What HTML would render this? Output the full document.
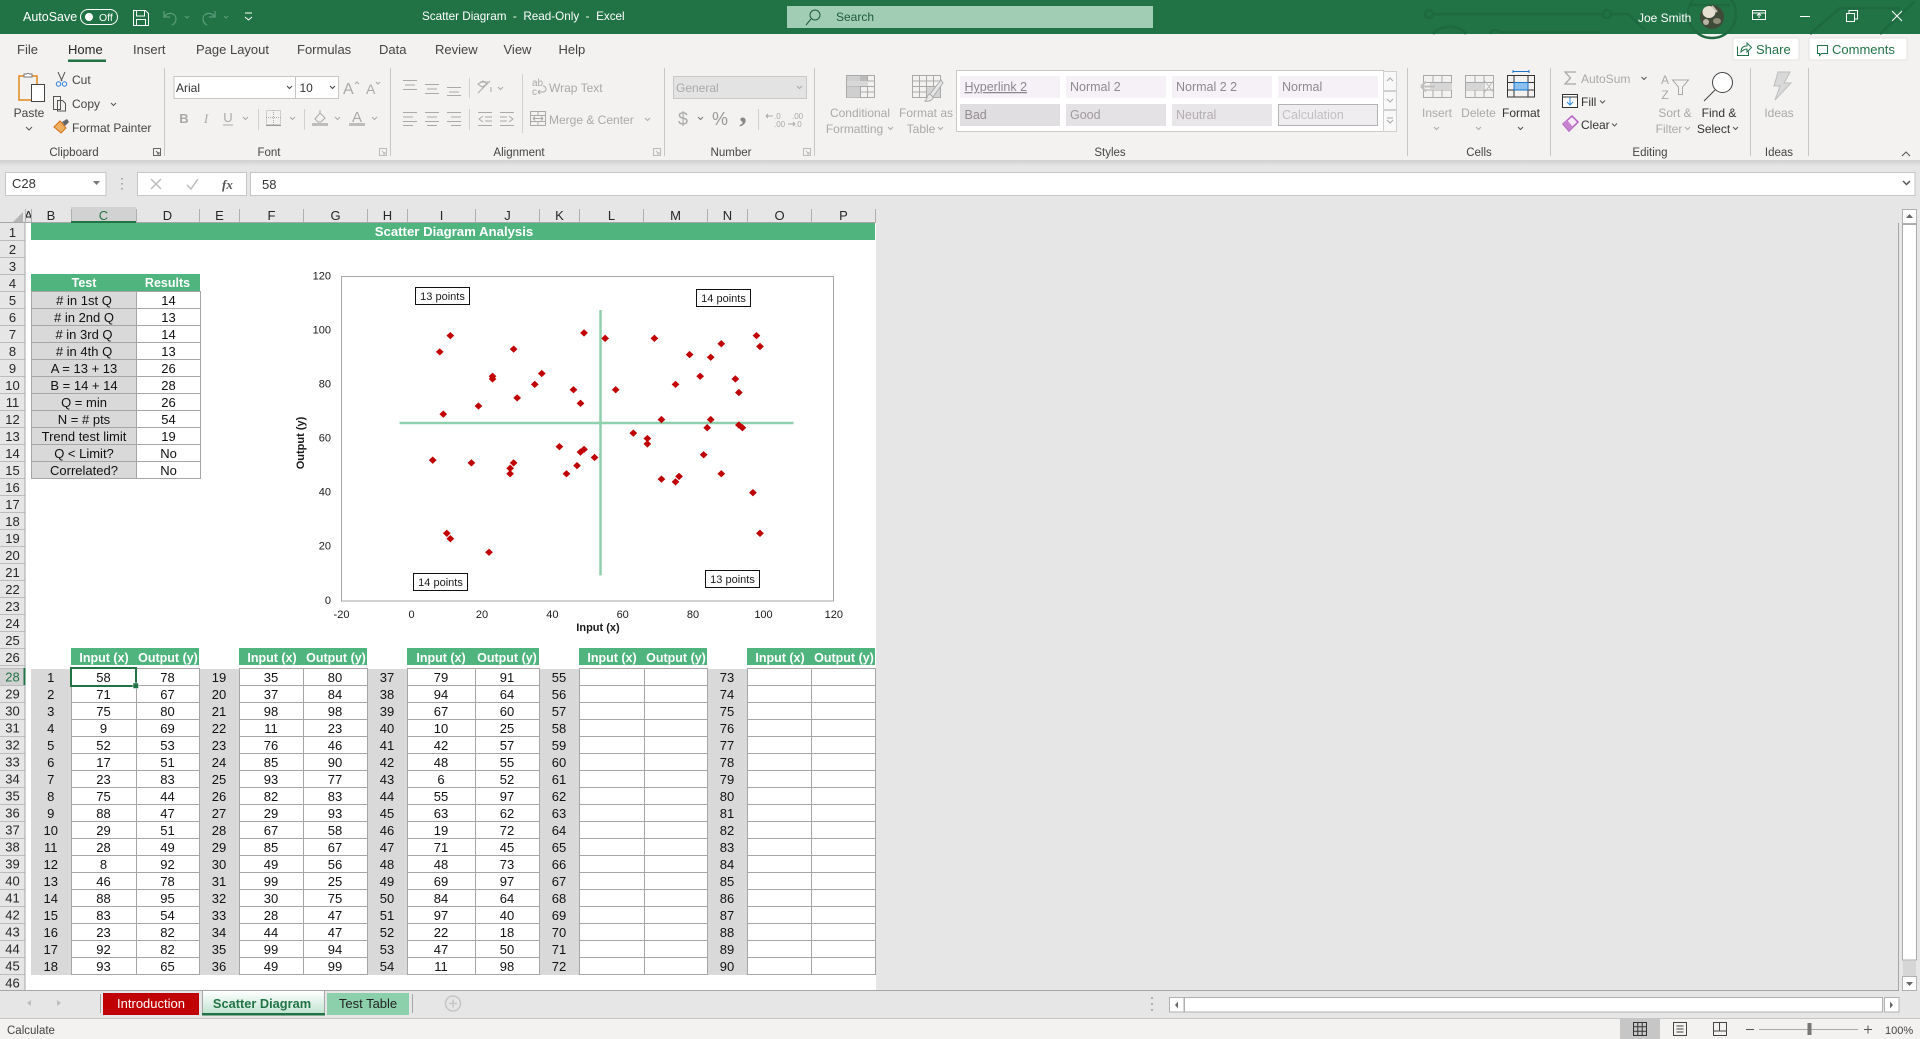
<!DOCTYPE html>
<html><head><meta charset="utf-8"><title>Scatter Diagram - Excel</title>
<style>
html,body{margin:0;padding:0;width:1920px;height:1039px;overflow:hidden;background:#e6e6e6;font-family:"Liberation Sans",Arial,sans-serif}
.a{position:absolute}
table{position:absolute;border-collapse:collapse;table-layout:fixed;font:13px/15px "Liberation Sans",Arial,sans-serif;color:#111}
td{border:1px solid #a6a6a6;padding:0;height:17px;box-sizing:border-box;text-align:center;background:#fff;overflow:hidden;white-space:nowrap}
td.n{background:#d9d9d9;border:0}
td.s{background:#d9d9d9}
svg{position:absolute;left:0;top:0}
svg text{font-family:"Liberation Sans",Arial,sans-serif;font-size:12px;fill:#444}
.d{fill:#a9a9a9!important}.w{fill:#fff!important}.k{fill:#262626!important}
.m{text-anchor:middle}.e{text-anchor:end}
.h text{font-size:13px;fill:#262626;text-anchor:middle}
.b text{font-size:12.5px;font-weight:bold;fill:#fff!important;text-anchor:middle}
.c text{font-size:11px;fill:#1a1a1a}
.ic{fill:none;stroke:#a9a9a9;stroke-width:1}
.id{fill:none;stroke:#555;stroke-width:1}
</style></head><body>
<div class="a" style="left:0;top:0;width:1920px;height:34px;background:#217346"></div>
<div class="a" style="left:787px;top:6px;width:366px;height:22px;background:#a0cdb3"></div>
<div class="a" style="left:0;top:34px;width:1920px;height:126px;background:#f3f2f1"></div>
<div class="a" style="left:0;top:160px;width:1920px;height:6px;background:linear-gradient(#cfcfcf,#e6e6e6)"></div>
<div class="a" style="left:25px;top:223px;width:851px;height:767px;background:#fff"></div>
<div class="a" style="left:0;top:207px;width:876px;height:16px;background:#e6e6e6"></div>
<div class="a" style="left:71px;top:207px;width:65px;height:16px;background:#d2d2d2"></div>
<div class="a" style="left:0;top:668px;width:25px;height:17px;background:#d2d2d2"></div>
<div class="a" style="left:31px;top:223px;width:844px;height:17px;background:#50b47f"></div>
<div class="a" style="left:31px;top:274px;width:169px;height:17px;background:#50b47f"></div>
<div class="a" style="left:71px;top:648px;width:128px;height:17px;background:#50b47f"></div>
<div class="a" style="left:239px;top:648px;width:128px;height:17px;background:#50b47f"></div>
<div class="a" style="left:407px;top:648px;width:132px;height:17px;background:#50b47f"></div>
<div class="a" style="left:579px;top:648px;width:128px;height:17px;background:#50b47f"></div>
<div class="a" style="left:747px;top:648px;width:128px;height:17px;background:#50b47f"></div>
<div class="a" style="left:31px;top:665px;width:844px;height:3px;background:#fff"></div>

<table style="left:31px;top:291px;width:169px">
<colgroup><col style="width:105px"><col style="width:64px"></colgroup>
<tr><td class="s"># in 1st Q</td><td>14</td></tr>
<tr><td class="s"># in 2nd Q</td><td>13</td></tr>
<tr><td class="s"># in 3rd Q</td><td>14</td></tr>
<tr><td class="s"># in 4th Q</td><td>13</td></tr>
<tr><td class="s">A = 13 + 13</td><td>26</td></tr>
<tr><td class="s">B = 14 + 14</td><td>28</td></tr>
<tr><td class="s">Q = min</td><td>26</td></tr>
<tr><td class="s">N = # pts</td><td>54</td></tr>
<tr><td class="s">Trend test limit</td><td>19</td></tr>
<tr><td class="s">Q &lt; Limit?</td><td>No</td></tr>
<tr><td class="s">Correlated?</td><td>No</td></tr>
</table>

<table style="left:31px;top:668px;width:844px">
<colgroup><col style="width:40px"><col style="width:65px"><col style="width:63px"><col style="width:40px"><col style="width:64px"><col style="width:64px"><col style="width:40px"><col style="width:68px"><col style="width:64px"><col style="width:40px"><col style="width:65px"><col style="width:63px"><col style="width:40px"><col style="width:64px"><col style="width:64px"></colgroup>
<tr><td class="n">1</td><td>58</td><td>78</td><td class="n">19</td><td>35</td><td>80</td><td class="n">37</td><td>79</td><td>91</td><td class="n">55</td><td></td><td></td><td class="n">73</td><td></td><td></td></tr>
<tr><td class="n">2</td><td>71</td><td>67</td><td class="n">20</td><td>37</td><td>84</td><td class="n">38</td><td>94</td><td>64</td><td class="n">56</td><td></td><td></td><td class="n">74</td><td></td><td></td></tr>
<tr><td class="n">3</td><td>75</td><td>80</td><td class="n">21</td><td>98</td><td>98</td><td class="n">39</td><td>67</td><td>60</td><td class="n">57</td><td></td><td></td><td class="n">75</td><td></td><td></td></tr>
<tr><td class="n">4</td><td>9</td><td>69</td><td class="n">22</td><td>11</td><td>23</td><td class="n">40</td><td>10</td><td>25</td><td class="n">58</td><td></td><td></td><td class="n">76</td><td></td><td></td></tr>
<tr><td class="n">5</td><td>52</td><td>53</td><td class="n">23</td><td>76</td><td>46</td><td class="n">41</td><td>42</td><td>57</td><td class="n">59</td><td></td><td></td><td class="n">77</td><td></td><td></td></tr>
<tr><td class="n">6</td><td>17</td><td>51</td><td class="n">24</td><td>85</td><td>90</td><td class="n">42</td><td>48</td><td>55</td><td class="n">60</td><td></td><td></td><td class="n">78</td><td></td><td></td></tr>
<tr><td class="n">7</td><td>23</td><td>83</td><td class="n">25</td><td>93</td><td>77</td><td class="n">43</td><td>6</td><td>52</td><td class="n">61</td><td></td><td></td><td class="n">79</td><td></td><td></td></tr>
<tr><td class="n">8</td><td>75</td><td>44</td><td class="n">26</td><td>82</td><td>83</td><td class="n">44</td><td>55</td><td>97</td><td class="n">62</td><td></td><td></td><td class="n">80</td><td></td><td></td></tr>
<tr><td class="n">9</td><td>88</td><td>47</td><td class="n">27</td><td>29</td><td>93</td><td class="n">45</td><td>63</td><td>62</td><td class="n">63</td><td></td><td></td><td class="n">81</td><td></td><td></td></tr>
<tr><td class="n">10</td><td>29</td><td>51</td><td class="n">28</td><td>67</td><td>58</td><td class="n">46</td><td>19</td><td>72</td><td class="n">64</td><td></td><td></td><td class="n">82</td><td></td><td></td></tr>
<tr><td class="n">11</td><td>28</td><td>49</td><td class="n">29</td><td>85</td><td>67</td><td class="n">47</td><td>71</td><td>45</td><td class="n">65</td><td></td><td></td><td class="n">83</td><td></td><td></td></tr>
<tr><td class="n">12</td><td>8</td><td>92</td><td class="n">30</td><td>49</td><td>56</td><td class="n">48</td><td>48</td><td>73</td><td class="n">66</td><td></td><td></td><td class="n">84</td><td></td><td></td></tr>
<tr><td class="n">13</td><td>46</td><td>78</td><td class="n">31</td><td>99</td><td>25</td><td class="n">49</td><td>69</td><td>97</td><td class="n">67</td><td></td><td></td><td class="n">85</td><td></td><td></td></tr>
<tr><td class="n">14</td><td>88</td><td>95</td><td class="n">32</td><td>30</td><td>75</td><td class="n">50</td><td>84</td><td>64</td><td class="n">68</td><td></td><td></td><td class="n">86</td><td></td><td></td></tr>
<tr><td class="n">15</td><td>83</td><td>54</td><td class="n">33</td><td>28</td><td>47</td><td class="n">51</td><td>97</td><td>40</td><td class="n">69</td><td></td><td></td><td class="n">87</td><td></td><td></td></tr>
<tr><td class="n">16</td><td>23</td><td>82</td><td class="n">34</td><td>44</td><td>47</td><td class="n">52</td><td>22</td><td>18</td><td class="n">70</td><td></td><td></td><td class="n">88</td><td></td><td></td></tr>
<tr><td class="n">17</td><td>92</td><td>82</td><td class="n">35</td><td>99</td><td>94</td><td class="n">53</td><td>47</td><td>50</td><td class="n">71</td><td></td><td></td><td class="n">89</td><td></td><td></td></tr>
<tr><td class="n">18</td><td>93</td><td>65</td><td class="n">36</td><td>49</td><td>99</td><td class="n">54</td><td>11</td><td>98</td><td class="n">72</td><td></td><td></td><td class="n">90</td><td></td><td></td></tr>
</table>

<svg width="1920" height="1039" viewBox="0 0 1920 1039">
<!-- title bar circuit -->
<g fill="none" stroke="#1e6940" stroke-width="2.500">
<circle cx="1429" cy="14" r="4"/><path d="M1433 14H1603"/><circle cx="1607" cy="14" r="4"/><path d="M1611 14H1628L1645 30"/>
<path d="M1433 34a18 12 0 0 1 33 0"/><path d="M1490 34a5 5 0 0 1 9-2H1600"/>
<circle cx="1712" cy="14" r="24"/><path d="M1690 5h40M1810 34L1840 8h60M1880 34L1914 2"/>
</g>
<!-- title bar left -->
<text x="23" y="21" class="w" style="font-size:12.500px">AutoSave</text>
<rect x="80.500" y="9.500" width="37" height="15" rx="7.500" fill="none" stroke="#fff"/>
<circle cx="89" cy="17" r="4" fill="#fff"/>
<text x="99" y="21" class="w" style="font-size:10.500px">Off</text>
<path d="M133.500 10.500h12l3 3v12h-15zM136.500 10.500v5.500h8v-5.500M136.500 25.500v-6h9v6" fill="none" stroke="#fff"/>
<path d="M164 11v6h6M164 17c4-6 12-4 12 2 0 3-2 5-4 6" fill="none" stroke="#5c9d7b" stroke-width="1.200"/>
<path d="M185 16l2 2 2-2M224 16l2 2 2-2" fill="none" stroke="#5c9d7b"/>
<path d="M215 11v6h-6M215 17c-4-6-12-4-12 2 0 3 2 5 4 6" fill="none" stroke="#5c9d7b" stroke-width="1.200"/>
<path d="M245 13h7M245 17l3.500 3 3.500-3" fill="none" stroke="#fff"/>
<text x="422" y="20" class="w" style="font-size:11.700px" xml:space="preserve">Scatter Diagram  -  Read-Only  -  Excel</text>
<circle cx="815" cy="15" r="5" fill="none" stroke="#1f5c3a"/><path d="M811 19l-5 6" stroke="#1f5c3a" fill="none"/>
<text x="836" y="21" style="font-size:12px;fill:#1f5c3a">Search</text>
<text x="1638" y="22" class="w" style="font-size:12px">Joe Smith</text>
<circle cx="1712" cy="17" r="12" fill="#3f4a38"/><ellipse cx="1709" cy="12" rx="6.500" ry="6" fill="#e6e0d2"/><ellipse cx="1717" cy="21" rx="4" ry="3" fill="#8d8d78"/><ellipse cx="1706" cy="22" rx="3" ry="3" fill="#b8b4a4"/><path d="M1712 6l5 6" stroke="#c9c3b4" stroke-width="2"/>
<path d="M1752.500 10.500h13v9h-13zM1752.500 13h13M1759 18v-4M1757 15.500l2-2 2 2" fill="none" stroke="#fff"/>
<path d="M1800 16.500h10" stroke="#fff"/>
<path d="M1846.500 13.500h8v8h-8zM1849 13v-2.500h8.500v8.500h-3" fill="none" stroke="#fff"/>
<path d="M1892 11l10 10M1902 11l-10 10" stroke="#fff"/>
<!-- tabs -->
<text x="17" y="54" style="font-size:13px">File</text>
<text x="68" y="54" style="font-size:13px;fill:#262626">Home</text>
<rect x="68" y="59.500" width="38" height="2.500" fill="#217346"/>
<text x="133" y="54" style="font-size:13px">Insert</text>
<text x="196" y="54" style="font-size:13px">Page Layout</text>
<text x="297" y="54" style="font-size:13px">Formulas</text>
<text x="379" y="54" style="font-size:13px">Data</text>
<text x="435" y="54" style="font-size:13px">Review</text>
<text x="503.500" y="54" style="font-size:13px">View</text>
<text x="558.500" y="54" style="font-size:13px">Help</text>
<!-- share / comments -->
<rect x="1733" y="38" width="66" height="22" rx="1" fill="#fff" stroke="#e4e2e0"/>
<rect x="1809" y="38" width="98" height="22" rx="1" fill="#fff" stroke="#e4e2e0"/>
<path d="M1738 47h-.5v8.500h11v-4M1741 52c0-4 2-6 6-6v-3l4.500 4.500-4.500 4.500v-3c-2 0-4 1-6 3z" fill="none" stroke="#217346"/>
<text x="1756" y="54" style="font-size:13px;fill:#217346">Share</text>
<path d="M1817.500 45.500h10v8h-6l-2 2v-2h-2z" fill="none" stroke="#217346"/>
<text x="1832" y="54" style="font-size:13px;fill:#217346">Comments</text>
<!-- group separators -->
<path d="M164.500 68v88M390.500 68v88M664.500 68v88M814.500 68v88M1407.500 68v88M1550.500 68v88M1750.500 68v88M1808.500 68v88" stroke="#c6c6c6" fill="none"/>
<g style="font-size:11px">
<text x="74" y="156" class="m" style="font-size:11.500px">Clipboard</text>
<text x="269" y="156" class="m" style="font-size:11.500px">Font</text>
<text x="519" y="156" class="m" style="font-size:11.500px">Alignment</text>
<text x="731" y="156" class="m" style="font-size:11.500px">Number</text>
<text x="1110" y="156" class="m" style="font-size:11.500px">Styles</text>
<text x="1479" y="156" class="m" style="font-size:11.500px">Cells</text>
<text x="1650" y="156" class="m" style="font-size:11.500px">Editing</text>
<text x="1779" y="156" class="m" style="font-size:11.500px">Ideas</text>
</g>
<path d="M153.500 148.500h7v7h-7zM156 151l3 3M159 152v2h-2" fill="none" stroke="#666"/>
<path d="M379.500 148.500h7v7h-7zM382 151l3 3M385 152v2h-2M653.500 148.500h7v7h-7zM656 151l3 3M659 152v2h-2M803.500 148.500h7v7h-7zM806 151l3 3M809 152v2h-2" fill="none" stroke="#bbb"/>
<!-- clipboard -->
<path d="M19 76h18v24H19z" fill="#f3f2f1" stroke="#e08a1e" stroke-width="1.500"/>
<path d="M24 76v-2h2.500a2 2 0 0 1 3 0H32v3h-8z" fill="#fff" stroke="#777"/>
<rect x="31.500" y="84.500" width="13" height="17" fill="#fff" stroke="#444"/>
<text x="29" y="117" class="m" style="font-size:12px">Paste</text>
<path d="M26 127l3 3 3-3" fill="none" stroke="#555"/>
<path d="M58 72l4 9M65 72l-4 9" stroke="#555" fill="none"/><circle cx="58.500" cy="84" r="2.200" fill="none" stroke="#2b7cd3"/><circle cx="64.500" cy="84" r="2.200" fill="none" stroke="#2b7cd3"/>
<text x="72" y="84" style="font-size:12px">Cut</text>
<path d="M53.500 96.500h7v13h-7zM57.500 100.500h5l3 3v7.500h-8z" fill="#f3f2f1" stroke="#555"/>
<text x="72" y="108" style="font-size:12px">Copy</text><path d="M111 103l2.500 2.500 2.500-2.500" fill="none" stroke="#555"/>
<path d="M54 127l6-6 6 7-5 5z" fill="#eeb060" stroke="#d06d14"/><path d="M62 122l5-3 2 3-4 4z" fill="#666"/>
<text x="72" y="132" style="font-size:12px">Format Painter</text>
<!-- font -->
<rect x="174" y="76.500" width="121.500" height="22" fill="#fff" stroke="#c6c6c6"/>
<rect x="295.500" y="76.500" width="43" height="22" fill="#fff" stroke="#c6c6c6"/>
<text x="176" y="92" style="font-size:12px;fill:#333">Arial</text>
<text x="299.500" y="92" style="font-size:12px;fill:#333">10</text>
<path d="M287 86l2.500 2.500 2.500-2.500M330 86l2.500 2.500 2.500-2.500" fill="none" stroke="#444"/>
<text x="343" y="94" class="d" style="font-size:16px">A</text><path d="M355 84l2-2 2 2" class="ic"/>
<text x="366" y="94" class="d" style="font-size:14px">A</text><path d="M376 82l2 2 2-2" class="ic"/>
<text x="184" y="123" class="d m" style="font-size:13px;font-weight:bold">B</text>
<text x="206" y="123" class="d m" style="font-size:13px;font-style:italic;font-family:'Liberation Serif',serif">I</text>
<text x="228" y="122" class="d m" style="font-size:13px">U</text><path d="M223 125h10" class="ic"/>
<path d="M243 117l2.500 2.500 2.500-2.500M290 117l2.500 2.500 2.500-2.500M335 117l2.500 2.500 2.500-2.500M372 117l2.500 2.500 2.500-2.500" class="ic"/>
<path d="M258.500 109v21M304.500 109v21" stroke="#d0d0d0"/>
<path d="M266.500 110.500h14v14h-14zM273.500 110v15M266 117.500h15" class="ic" stroke-dasharray="1 1"/>
<path d="M266 125.500h15" stroke="#999"/>
<path d="M315 119l5-6 5 5-4 4h-3zM320 110v4" class="ic"/><rect x="312" y="123" width="16" height="3" fill="#bdbdbd"/>
<text x="357" y="122" class="d m" style="font-size:15px">A</text><rect x="349" y="123" width="16" height="3" fill="#bdbdbd"/>
<!-- alignment -->
<path d="M403 80.500h14M405 85h10M403 89.500h14M425 84.500h14M427 89h10M425 93.500h14M447 87.500h14M449 92h10M447 95.500h14" class="ic"/>
<path d="M469.500 78v20M469.500 109v21M522.500 74v59" stroke="#d0d0d0"/>
<path d="M478 93l12-12M480 82h8M478 84l5-3 4 3-5 3zM491 92v-5" class="ic"/>
<path d="M498 87l2.500 2.500 2.500-2.500" class="ic"/>
<text x="532" y="86" class="d" style="font-size:10px">ab</text><text x="532" y="95" class="d" style="font-size:10px">c</text><path d="M538 92h5a3 3 0 0 0 0-6M538 92l2-2M538 92l2 2" class="ic"/>
<text x="549" y="92" class="d" style="font-size:12px">Wrap Text</text>
<path d="M403 112.500h14M403 117h10M403 121.500h14M403 125.500h10M425 112.500h14M427 117h10M425 121.500h14M427 125.500h10M447 112.500h14M451 117h10M447 121.500h14M451 125.500h10" class="ic"/>
<path d="M478 112.500h14M485 117h7M485 121h7M478 125.500h14M483 116l-4 3 4 3M500 112.500h14M500 117h7M500 121h7M500 125.500h14M509 116l4 3-4 3" class="ic"/>
<path d="M530.500 111.500h15v14h-15zM530.500 115.500h15M530.500 121.500h15M538 111v4M538 122v4M533 118.500h10M533 118.500l2-2M533 118.500l2 2M543 118.500l-2-2M543 118.500l-2 2" class="ic"/>
<text x="549" y="124" class="d" style="font-size:12px">Merge &amp; Center</text>
<path d="M645 118l2.500 2.500 2.500-2.500" class="ic"/>
<!-- number -->
<rect x="673.500" y="76.500" width="133" height="22" fill="#e3e3e3" stroke="#c8c8c8"/>
<text x="676" y="92" class="d" style="font-size:12px">General</text>
<path d="M797 86l2.500 2.500 2.500-2.500" class="ic"/>
<text x="683" y="125" class="d m" style="font-size:18px">$</text>
<path d="M698 117l2.500 2.500 2.500-2.500" class="ic" style="stroke:#777"/>
<text x="720" y="125" class="m" style="font-size:18px;fill:#999">%</text>
<text x="743" y="122" class="m" style="font-size:30px;font-weight:bold;fill:#888;font-family:'Liberation Serif',serif">,</text>
<path d="M758.500 109v21" stroke="#d0d0d0"/>
<text x="774" y="119" class="d" style="font-size:8px">.0</text>
<text x="774" y="127" class="d" style="font-size:8px">.00</text>
<text x="792" y="119" class="d" style="font-size:8px">.00</text>
<text x="795" y="127" class="d" style="font-size:8px">.0</text>
<path d="M766 116h7M766 116l2-2M766 116l2 2M788 124h7M795 124l-2-2M795 124l-2 2" class="ic"/>
<!-- styles -->
<path d="M846.500 75.500h28v22h-28zM846.500 81h28M846.500 86.500h28M846.500 92h28M853.500 75v22M860.500 75v22M867.500 75v22" class="ic"/>
<rect x="847" y="76" width="13" height="5" fill="#cfcfcf"/><rect x="847" y="81" width="21" height="5" fill="#d8d8d8"/><rect x="847" y="86.500" width="13" height="11" fill="#cfcfcf"/><rect x="860" y="76" width="7" height="5" fill="#bbb"/>
<text x="860" y="117" class="m d" style="font-size:12px">Conditional</text>
<text x="854.500" y="133" class="m d" style="font-size:12px">Formatting</text><path d="M888 127l2.500 2.500 2.500-2.500" class="ic"/>
<path d="M912.500 75.500h28v22h-28zM912.500 81h28M912.500 86.500h28M912.500 92h28M919.500 75v22M926.500 75v22M933.500 75v22" class="ic"/>
<rect x="927" y="87" width="13" height="10" fill="#d4d4d4"/>
<path d="M941 80l-11 14 3 3 10-14zM930 94c-3 0-3 6-5 7 4 1 8-1 8-4" fill="#e8e8e8" stroke="#aaa"/>
<text x="926" y="117" class="m d" style="font-size:12px">Format as</text>
<text x="921" y="133" class="m d" style="font-size:12px">Table</text><path d="M938 127l2.500 2.500 2.500-2.500" class="ic"/>
<rect x="956.500" y="70.500" width="427" height="61" fill="#fff" stroke="#c9c9c9"/>
<rect x="960" y="76" width="100" height="22" fill="#f5f1f7"/><rect x="1066" y="76" width="100" height="22" fill="#f5f1f7"/><rect x="1172" y="76" width="100" height="22" fill="#f5f1f7"/><rect x="1278" y="76" width="100" height="22" fill="#f5f1f7"/>
<rect x="960" y="104" width="100" height="22" fill="#e1dee1"/><rect x="1066" y="104" width="100" height="22" fill="#e5e2e5"/><rect x="1172" y="104" width="100" height="22" fill="#e9e6e9"/><rect x="1278.500" y="104.500" width="99" height="21" fill="#f0edf0" stroke="#b5b2b5"/>
<text x="964.500" y="91" style="font-size:12.500px;fill:#8a868f;text-decoration:underline">Hyperlink 2</text>
<text x="1070" y="91" style="font-size:12.500px;fill:#8b8b8b">Normal 2</text>
<text x="1176" y="91" style="font-size:12.500px;fill:#8b8b8b">Normal 2 2</text>
<text x="1282" y="91" style="font-size:12.500px;fill:#8b8b8b">Normal</text>
<text x="964.500" y="119" style="font-size:12.500px;fill:#918d91">Bad</text>
<text x="1070" y="119" style="font-size:12.500px;fill:#9e9a9e">Good</text>
<text x="1176" y="119" style="font-size:12.500px;fill:#b2aeb2">Neutral</text>
<text x="1282" y="119" style="font-size:12.500px;fill:#c2bfc2">Calculation</text>
<rect x="1383.500" y="71.500" width="13" height="19" fill="#f8f8f8" stroke="#d0d0d0"/><rect x="1383.500" y="91.500" width="13" height="18" fill="#f8f8f8" stroke="#d0d0d0"/><rect x="1383.500" y="110.500" width="13" height="21" fill="#f8f8f8" stroke="#d0d0d0"/>
<path d="M1387 81l3-3 3 3M1387 99l3 3 3-3M1387 118h6M1387 120l3 3 3-3" class="ic"/>
<!-- cells -->
<path d="M1423.500 75.500h28v22h-28zM1423.500 82.500h28M1423.500 90h28M1433 75v22M1442 75v22" class="ic"/>
<rect x="1430" y="83" width="22" height="7" fill="#d6d6d6"/>
<path d="M1421 86.500h14M1421 86.500l5-5M1421 86.500l5 5" stroke="#c0c0c0" stroke-width="2" fill="none"/>
<text x="1437" y="117" class="m d" style="font-size:12px">Insert</text><path d="M1434 127l2.500 2.500 2.500-2.500" class="ic"/>
<path d="M1465.500 75.500h28v22h-28zM1465.500 82.500h28M1465.500 90h28M1475 75v22M1484 75v22" class="ic"/>
<rect x="1466" y="83" width="18" height="7" fill="#d6d6d6"/>
<path d="M1484 80l10 13M1494 80l-10 13" stroke="#bbb" fill="none"/>
<text x="1478.500" y="117" class="m d" style="font-size:12px">Delete</text><path d="M1476 127l2.500 2.500 2.500-2.500" class="ic"/>
<rect x="1514" y="82" width="14" height="8" fill="#8cc0ee"/>
<path d="M1507.500 75.500h27v21.500h-27zM1507.500 82.500h27M1507.500 90h27M1514 75v22M1528 75v22" fill="none" stroke="#333"/>
<path d="M1514 82.500h14v7.500h-14z" fill="none" stroke="#1a75c9"/>
<path d="M1513 71.500h16M1513 70v3M1529 70v3" stroke="#1a75c9" fill="none"/>
<text x="1521" y="117" class="m" style="font-size:12px;fill:#333">Format</text><path d="M1518 127l2.500 2.500 2.500-2.500" class="id"/>
<!-- editing -->
<path d="M1576 72h-11l5.500 6-5.500 6h11" class="ic" style="stroke-width:1.300"/>
<text x="1581" y="83" class="d" style="font-size:12px">AutoSum</text>
<path d="M1641.500 77l2.500 2.500 2.500-2.500" class="id"/>
<rect x="1562.500" y="94.500" width="15" height="13" fill="#fff" stroke="#333"/><path d="M1570 97v8M1567 102l3 3 3-3" fill="none" stroke="#2b8ad9"/><path d="M1562.500 97h15" stroke="#333"/>
<text x="1581" y="106" style="font-size:12px;fill:#333">Fill</text><path d="M1600 100.500l2.500 2.500 2.500-2.500" class="id"/>
<path d="M1563 124l9-8 6 6-9 9z" fill="#f7eaf8" stroke="#b25fc0" stroke-width="1.500"/><path d="M1563 124l6 7 4-4-6-7z" fill="#c583d0"/>
<text x="1581" y="129" style="font-size:12px;fill:#333">Clear</text><path d="M1612 123.500l2.500 2.500 2.500-2.500" class="id"/>
<text x="1665" y="84" class="m d" style="font-size:12px">A</text><text x="1665" y="99" class="m d" style="font-size:12px">Z</text>
<path d="M1672.500 80h16l-6 7v7.500h-4v-7.500z" class="ic"/>
<text x="1675" y="117" class="m d" style="font-size:12px">Sort &amp;</text>
<text x="1669" y="133" class="m d" style="font-size:12px">Filter</text><path d="M1685 127l2.500 2.500 2.500-2.500" class="ic"/>
<circle cx="1722.500" cy="82.500" r="10" fill="#fff" stroke="#444"/><path d="M1715 90l-11 11" stroke="#444" fill="none"/>
<text x="1719" y="117" class="m" style="font-size:12px;fill:#333">Find &amp;</text>
<text x="1713.500" y="133" class="m" style="font-size:12px;fill:#333">Select</text><path d="M1733 127l2.500 2.500 2.500-2.500" class="id"/>
<path d="M1778 72h12l-6 11h7l-16 17 5-14h-6z" fill="#d9d9d9" stroke="#bdbdbd"/>
<text x="1779" y="117" class="m d" style="font-size:12px">Ideas</text>
<path d="M1902 156l4-4 4 4" fill="none" stroke="#555"/>
<!-- formula bar -->
<rect x="5.500" y="172.500" width="100.500" height="23" fill="#fff" stroke="#c6c6c6"/>
<text x="12" y="188" style="font-size:13px;fill:#333">C28</text>
<path d="M93 181h7l-3.500 4z" fill="#777"/>
<path d="M122 178v1.500M122 183v1.500M122 188v1.500" stroke="#999" stroke-width="1.500"/>
<rect x="137.500" y="172.500" width="109" height="23" fill="#fff" stroke="#c6c6c6"/>
<path d="M151 179l10 10M161 179l-10 10M187 185l4 4 7-10" stroke="#bdbdbd" stroke-width="1.500" fill="none"/>
<text x="222" y="189" style="font-size:13px;font-style:italic;font-weight:bold;fill:#555;font-family:'Liberation Serif',serif">fx</text>
<rect x="250.500" y="172.500" width="1664.500" height="23" fill="#fff" stroke="#c6c6c6"/>
<text x="262" y="189" style="font-size:13px;fill:#333">58</text>
<path d="M1903 181l3.500 3.500 3.500-3.500" fill="none" stroke="#555" stroke-width="1.500"/>
<!-- col headers -->
<path d="M13 222h10v-10z" fill="#b5b5b5"/>
<g stroke="#b0b0b0" fill="none"><path d="M25.500 209v14M31.500 209v14M71.500 209v14M136.500 209v14M199.500 209v14M239.500 209v14M303.500 209v14M367.500 209v14M407.500 209v14M475.500 209v14M539.500 209v14M579.500 209v14M643.500 209v14M707.500 209v14M747.500 209v14M811.500 209v14M875.500 209v14"/></g>
<path d="M0 222.500H876" stroke="#a6a6a6"/><rect x="71" y="221" width="65" height="2" fill="#217346"/>
<defs><clipPath id="ca"><rect x="26" y="207" width="5" height="16"/></clipPath></defs>
<g class="h">
<text x="28.500" y="220" clip-path="url(#ca)">A</text><text x="51" y="220">B</text><text x="103.500" y="220" style="fill:#217346">C</text><text x="167.500" y="220">D</text><text x="219.500" y="220">E</text><text x="271.500" y="220">F</text><text x="335.500" y="220">G</text><text x="387.500" y="220">H</text><text x="441.500" y="220">I</text><text x="507.500" y="220">J</text><text x="559.500" y="220">K</text><text x="611.500" y="220">L</text><text x="675.500" y="220">M</text><text x="727.500" y="220">N</text><text x="779.500" y="220">O</text><text x="843.500" y="220">P</text>
</g>
<!-- row headers -->
<path d="M0 240.500h25M0 257.500h25M0 274.500h25M0 291.500h25M0 308.500h25M0 325.500h25M0 342.500h25M0 359.500h25M0 376.500h25M0 393.500h25M0 410.500h25M0 427.500h25M0 444.500h25M0 461.500h25M0 478.500h25M0 495.500h25M0 512.500h25M0 529.500h25M0 546.500h25M0 563.500h25M0 580.500h25M0 597.500h25M0 614.500h25M0 631.500h25M0 648.500h25M0 665.500h25M0 668.500h25M0 685.500h25M0 702.500h25M0 719.500h25M0 736.500h25M0 753.500h25M0 770.500h25M0 787.500h25M0 804.500h25M0 821.500h25M0 838.500h25M0 855.500h25M0 872.500h25M0 889.500h25M0 906.500h25M0 923.500h25M0 940.500h25M0 957.500h25M0 974.500h25" stroke="#bcbcbc" fill="none"/>
<path d="M25 223v767" stroke="#a6a6a6"/><rect x="23.500" y="668" width="2" height="17" fill="#217346"/>
<g class="h">
<text x="12.500" y="237">1</text><text x="12.500" y="254">2</text><text x="12.500" y="271">3</text><text x="12.500" y="288">4</text><text x="12.500" y="305">5</text><text x="12.500" y="322">6</text><text x="12.500" y="339">7</text><text x="12.500" y="356">8</text><text x="12.500" y="373">9</text><text x="12.500" y="390">10</text><text x="12.500" y="407">11</text><text x="12.500" y="424">12</text><text x="12.500" y="441">13</text><text x="12.500" y="458">14</text><text x="12.500" y="475">15</text><text x="12.500" y="492">16</text><text x="12.500" y="509">17</text><text x="12.500" y="526">18</text><text x="12.500" y="543">19</text><text x="12.500" y="560">20</text><text x="12.500" y="577">21</text><text x="12.500" y="594">22</text><text x="12.500" y="611">23</text><text x="12.500" y="628">24</text><text x="12.500" y="645">25</text><text x="12.500" y="662">26</text>
<text x="12.500" y="681.500" style="fill:#217346">28</text><text x="12.500" y="698.500">29</text><text x="12.500" y="715.500">30</text><text x="12.500" y="732.500">31</text><text x="12.500" y="749.500">32</text><text x="12.500" y="766.500">33</text><text x="12.500" y="783.500">34</text><text x="12.500" y="800.500">35</text><text x="12.500" y="817.500">36</text><text x="12.500" y="834.500">37</text><text x="12.500" y="851.500">38</text><text x="12.500" y="868.500">39</text><text x="12.500" y="885.500">40</text><text x="12.500" y="902.500">41</text><text x="12.500" y="919.500">42</text><text x="12.500" y="936.500">43</text><text x="12.500" y="953.500">44</text><text x="12.500" y="970.500">45</text><text x="12.500" y="987.500">46</text>
</g>
<!-- green header text -->
<g class="b">
<text x="454" y="236" style="font-size:13.200px">Scatter Diagram Analysis</text>
<text x="84" y="287">Test</text><text x="167.500" y="287">Results</text>
<text x="104" y="662">Input (x)</text><text x="168" y="662">Output (y)</text>
<text x="272" y="662">Input (x)</text><text x="336" y="662">Output (y)</text>
<text x="441" y="662">Input (x)</text><text x="507" y="662">Output (y)</text>
<text x="612" y="662">Input (x)</text><text x="676" y="662">Output (y)</text>
<text x="780" y="662">Input (x)</text><text x="844" y="662">Output (y)</text>
</g>
<!-- selection -->
<rect x="71" y="668" width="65" height="18" fill="none" stroke="#217346" stroke-width="2"/>
<rect x="133" y="683" width="5.500" height="5.500" fill="#217346" stroke="#fff" stroke-width=".5"/>
<!-- chart -->
<rect x="341.500" y="276.500" width="492" height="324.500" fill="#fff" stroke="#a6a6a6"/>
<path d="M399.500 423H793.500M600.500 310V575.500" stroke="#8fd0ac" stroke-width="2.500" fill="none"/>
<defs><path id="p" d="M0-1.350L1.100 0 0 1.350-1.100 0z" fill="#c00000"/></defs>
<g transform="translate(411.600 601) scale(3.519 -2.708)">
<use href="#p" x="58" y="78"/><use href="#p" x="71" y="67"/><use href="#p" x="75" y="80"/><use href="#p" x="9" y="69"/><use href="#p" x="52" y="53"/><use href="#p" x="17" y="51"/><use href="#p" x="23" y="83"/><use href="#p" x="75" y="44"/><use href="#p" x="88" y="47"/><use href="#p" x="29" y="51"/><use href="#p" x="28" y="49"/><use href="#p" x="8" y="92"/><use href="#p" x="46" y="78"/><use href="#p" x="88" y="95"/><use href="#p" x="83" y="54"/><use href="#p" x="23" y="82"/><use href="#p" x="92" y="82"/><use href="#p" x="93" y="65"/>
<use href="#p" x="35" y="80"/><use href="#p" x="37" y="84"/><use href="#p" x="98" y="98"/><use href="#p" x="11" y="23"/><use href="#p" x="76" y="46"/><use href="#p" x="85" y="90"/><use href="#p" x="93" y="77"/><use href="#p" x="82" y="83"/><use href="#p" x="29" y="93"/><use href="#p" x="67" y="58"/><use href="#p" x="85" y="67"/><use href="#p" x="49" y="56"/><use href="#p" x="99" y="25"/><use href="#p" x="30" y="75"/><use href="#p" x="28" y="47"/><use href="#p" x="44" y="47"/><use href="#p" x="99" y="94"/><use href="#p" x="49" y="99"/>
<use href="#p" x="79" y="91"/><use href="#p" x="94" y="64"/><use href="#p" x="67" y="60"/><use href="#p" x="10" y="25"/><use href="#p" x="42" y="57"/><use href="#p" x="48" y="55"/><use href="#p" x="6" y="52"/><use href="#p" x="55" y="97"/><use href="#p" x="63" y="62"/><use href="#p" x="19" y="72"/><use href="#p" x="71" y="45"/><use href="#p" x="48" y="73"/><use href="#p" x="69" y="97"/><use href="#p" x="84" y="64"/><use href="#p" x="97" y="40"/><use href="#p" x="22" y="18"/><use href="#p" x="47" y="50"/><use href="#p" x="11" y="98"/>
</g>
<g class="c">
<text x="331" y="279.500" class="e">120</text><text x="331" y="333.500" class="e">100</text><text x="331" y="387.500" class="e">80</text><text x="331" y="441.500" class="e">60</text><text x="331" y="495.500" class="e">40</text><text x="331" y="549.500" class="e">20</text><text x="331" y="604" class="e">0</text>
<text x="341.500" y="618" class="m">-20</text><text x="411.600" y="618" class="m">0</text><text x="482" y="618" class="m">20</text><text x="552.400" y="618" class="m">40</text><text x="622.700" y="618" class="m">60</text><text x="693" y="618" class="m">80</text><text x="763.500" y="618" class="m">100</text><text x="833.800" y="618" class="m">120</text>
<text x="598" y="631" class="m" style="font-weight:bold">Input (x)</text>
<text transform="translate(304 443) rotate(-90)" class="m" style="font-weight:bold">Output (y)</text>
<g fill="#fff" stroke="#111"><rect x="415.500" y="287.500" width="54" height="17"/><rect x="696.500" y="289.500" width="54" height="17"/><rect x="413.500" y="573.500" width="54" height="17"/><rect x="705.500" y="570.500" width="54" height="17"/></g>
<text x="442.500" y="300" class="m">13 points</text><text x="723.500" y="302" class="m">14 points</text><text x="440.500" y="586" class="m">14 points</text><text x="732.500" y="583" class="m">13 points</text>
</g>
<!-- right scrollbar + edges -->
<path d="M1898.500 223V990.500H0" stroke="#a6a6a6" fill="none" stroke-width="1"/>
<rect x="1902.500" y="209.500" width="14" height="14" fill="#fff" stroke="#b0b0b0"/>
<path d="M1906 218h7l-3.500-4z" fill="#666"/>
<rect x="1902.500" y="224.500" width="14" height="735.500" fill="#fff" stroke="#ababab"/>
<rect x="1903" y="961" width="13" height="15" fill="#d6d6d6"/>
<rect x="1902.500" y="976.500" width="14" height="14" fill="#fff" stroke="#b0b0b0"/>
<path d="M1906 982h7l-3.500 4z" fill="#666"/>
<!-- sheet tabs -->
<path d="M31 1000v6l-4-3zM57 1000v6l4-3z" fill="#bdbdbd"/>
<path d="M100.500 994v19M412.500 994v19" stroke="#a6a6a6"/>
<rect x="103" y="993" width="96" height="22" fill="#c00000"/>
<text x="151" y="1008" class="m w" style="font-size:13px">Introduction</text>
<defs><linearGradient id="tg" x1="0" y1="0" x2="0" y2="1"><stop offset="0" stop-color="#fff"/><stop offset="1" stop-color="#bfe3d0"/></linearGradient></defs>
<rect x="202.500" y="991" width="122" height="23" fill="url(#tg)"/>
<path d="M202.500 1014V990.500H324.500V1014" fill="none" stroke="#a6a6a6"/>
<rect x="202" y="1013" width="123" height="2.500" fill="#217346"/>
<text x="262" y="1008" class="m" style="font-size:12.800px;font-weight:bold;fill:#217346">Scatter Diagram</text>
<rect x="327" y="993" width="82" height="22" fill="#8ccfab"/>
<text x="368" y="1008" class="m" style="font-size:13px;fill:#222">Test Table</text>
<circle cx="453" cy="1003.500" r="7.500" fill="none" stroke="#c6c6c6" stroke-width="1.500"/><path d="M449 1003.500h8M453 999.500v8" stroke="#c6c6c6" stroke-width="1.500"/>
<path d="M1152 997v2M1152 1003v2M1152 1009v2" stroke="#b0b0b0" stroke-width="2"/>
<rect x="1169.500" y="997.500" width="14.500" height="14.500" fill="#fff" stroke="#b0b0b0"/>
<rect x="1184.500" y="997.500" width="698" height="14.500" fill="#fff" stroke="#b0b0b0"/>
<rect x="1884.500" y="997.500" width="14.500" height="14.500" fill="#fff" stroke="#b0b0b0"/>
<path d="M1178 1001.500v7l-3-3.500zM1890 1001.500v7l3-3.500z" fill="#666"/>
<!-- status bar -->
<rect x="0" y="1018" width="1920" height="21" fill="#f3f2f1"/>
<path d="M0 1018.500H1920" stroke="#c6c6c6"/>
<text x="7" y="1034" style="font-size:11.500px">Calculate</text>
<rect x="1620" y="1019" width="40" height="20" fill="#c6c6c6"/>
<path d="M1633.500 1022.500h13v13h-13zM1633.500 1026.800h13M1633.500 1031.200h13M1637.800 1022v14M1642.200 1022v14" fill="none" stroke="#333"/>
<path d="M1673.500 1022.500h13v13h-13zM1676.500 1026h7M1676.500 1029h7M1676.500 1032h7" fill="none" stroke="#444"/>
<path d="M1713.500 1022.500h13v13h-13zM1713.500 1031h13M1719.500 1022v9" fill="none" stroke="#444"/>
<path d="M1746 1029.500h8M1864 1029.500h8M1868 1025.500v8" stroke="#555" fill="none"/>
<path d="M1759 1029.500H1858" stroke="#aaa" fill="none"/>
<rect x="1807.500" y="1023" width="4" height="12" fill="#777"/>
<text x="1885" y="1034" style="font-size:11px">100%</text>
</svg>
</body></html>
